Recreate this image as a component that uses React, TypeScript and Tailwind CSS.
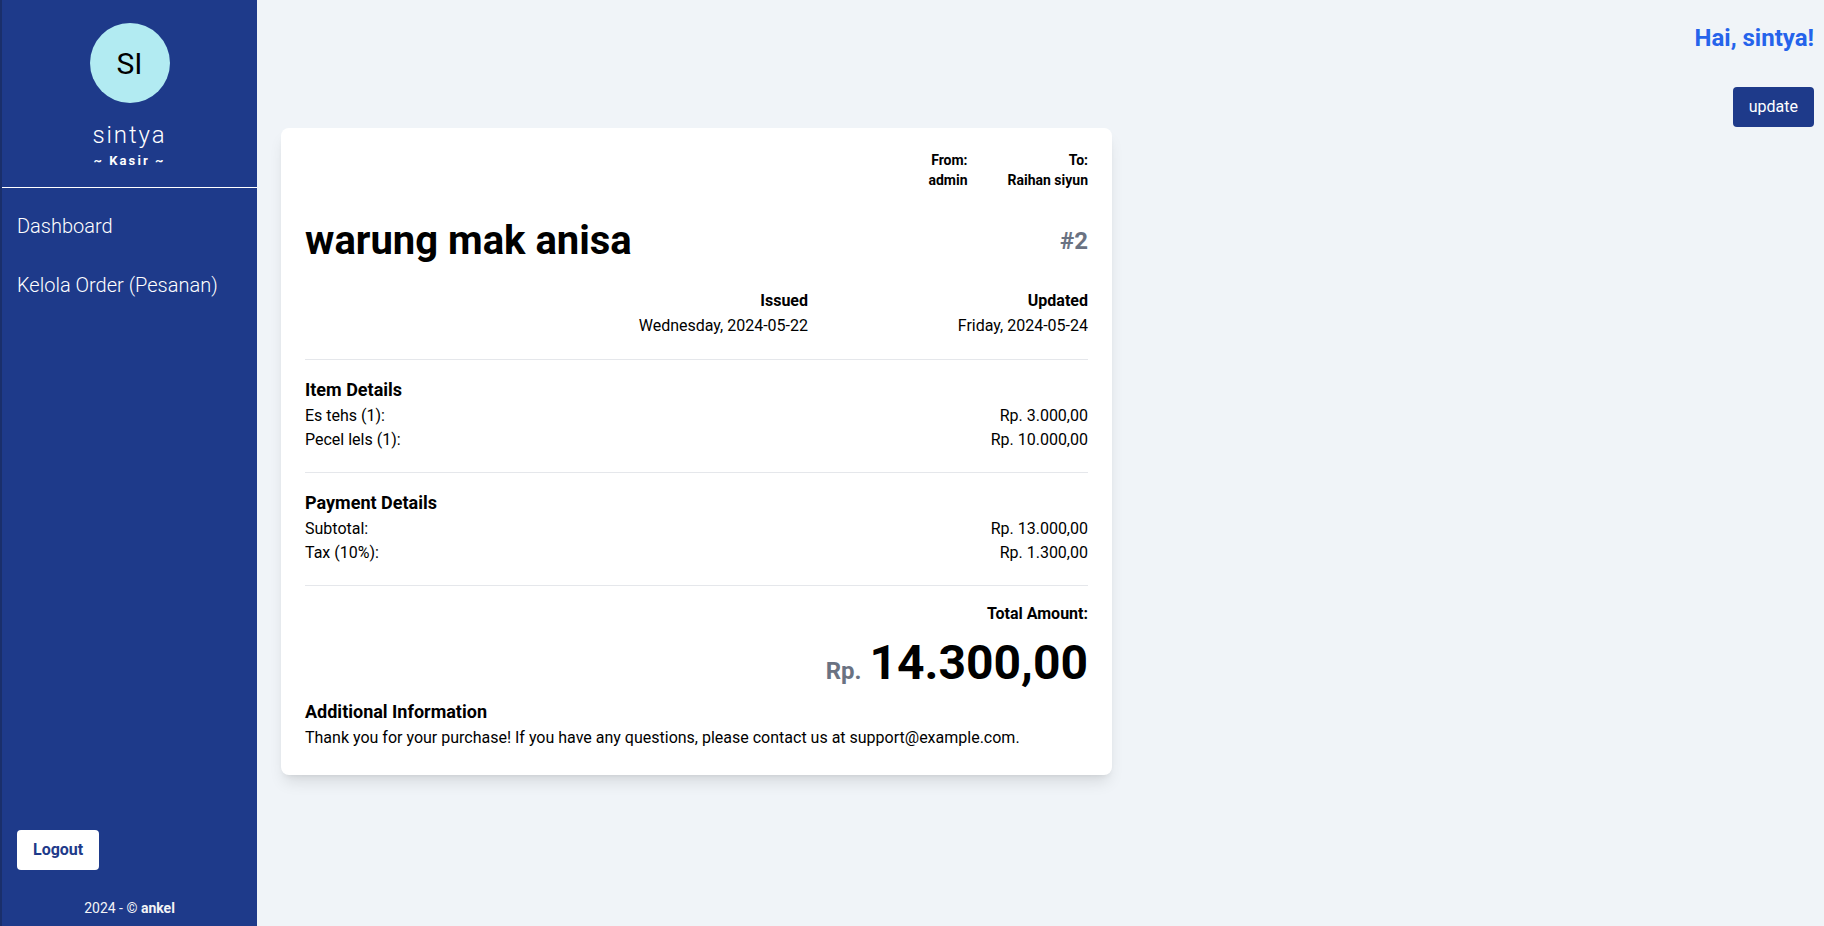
export default function App() {
  return (
    <div className="flex h-[926px] w-full overflow-hidden font-['Roboto',sans-serif] text-black">
      <aside className="w-[257px] shrink-0 bg-[#1e3a8a] border-l-2 border-[#1a2f6b] flex flex-col">
        <div className="flex flex-col items-center pt-[23px]">
          <div className="w-20 h-20 rounded-full bg-[#b2ebf2] flex items-center justify-center text-[30px] text-black">
            SI
          </div>
          <p className="mt-4 text-2xl leading-8 font-light tracking-[0.08em] text-white">sintya</p>
          <p className="mt-[2px] text-[13px] leading-4 font-bold tracking-[0.16em] text-white">~ Kasir ~</p>
        </div>
        <div className="mt-[18px] h-px bg-white" />
        <nav className="mt-6 pl-[15px] flex flex-col gap-[31px] text-xl leading-7 font-light text-white">
          <a>Dashboard</a>
          <a>Kelola Order (Pesanan)</a>
        </nav>
        <div className="mt-auto pl-[15px]">
          <button className="bg-white text-[#1e3a8a] font-bold px-4 py-2 rounded">Logout</button>
        </div>
        <p className="mt-7 mb-2 text-center text-sm leading-5 text-gray-100">
          2024 - © <span className="font-bold">ankel</span>
        </p>
      </aside>

      <main className="flex-1 bg-[#f0f4f8] pl-6 pr-[10px] pt-[22px]">
        <p className="text-right text-2xl leading-8 font-bold text-[#2563eb]">Hai, sintya!</p>
        <div className="mt-[33px] flex justify-end">
          <button className="bg-[#1e3a8a] text-white px-4 py-2 rounded-sm">update</button>
        </div>

        <div className="mt-px w-[831px] bg-white rounded-lg shadow-lg px-6 pt-[22px] pb-[25px]">
          <div className="flex justify-end gap-10 text-sm leading-5 font-bold">
            <div className="text-right">
              <p>From:</p>
              <p>admin</p>
            </div>
            <div className="text-right">
              <p>To:</p>
              <p>Raihan siyun</p>
            </div>
          </div>

          <div className="mt-[31px] flex items-center justify-between">
            <h1 className="text-[40px] leading-10 font-bold">warung mak anisa</h1>
            <span className="text-2xl font-bold text-gray-500">#2</span>
          </div>

          <div className="mt-7 flex justify-end text-right">
            <div className="w-[280px]">
              <p className="font-bold">Issued</p>
              <p className="mt-px">Wednesday, 2024-05-22</p>
            </div>
            <div className="w-[280px]">
              <p className="font-bold">Updated</p>
              <p className="mt-px">Friday, 2024-05-24</p>
            </div>
          </div>

          <hr className="mt-[21px] mb-4 border-gray-200" />

          <h3 className="text-lg leading-7 font-bold">Item Details</h3>
          <div className="flex justify-between">
            <span>Es tehs (1):</span>
            <span>Rp. 3.000,00</span>
          </div>
          <div className="flex justify-between">
            <span>Pecel lels (1):</span>
            <span>Rp. 10.000,00</span>
          </div>

          <hr className="mt-5 mb-4 border-gray-200" />

          <h3 className="text-lg leading-7 font-bold">Payment Details</h3>
          <div className="flex justify-between">
            <span>Subtotal:</span>
            <span>Rp. 13.000,00</span>
          </div>
          <div className="flex justify-between">
            <span>Tax (10%):</span>
            <span>Rp. 1.300,00</span>
          </div>

          <hr className="mt-5 mb-4 border-gray-200" />

          <p className="text-right font-bold">Total Amount:</p>
          <div className="mt-[13px] flex justify-end items-baseline">
            <span className="mr-2 text-2xl font-bold text-gray-500">Rp.</span>
            <span className="text-5xl leading-none font-bold">14.300,00</span>
          </div>

          <h3 className="mt-[11px] text-lg leading-7 font-bold">Additional Information</h3>
          <p>Thank you for your purchase! If you have any questions, please contact us at support@example.com.</p>
        </div>
      </main>
    </div>
  )
}
